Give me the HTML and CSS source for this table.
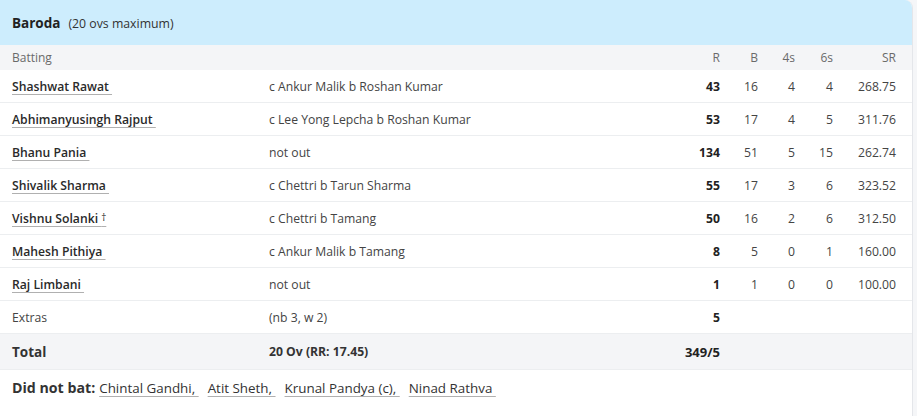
FILE: index.html
```html
<!DOCTYPE html>
<html>
<head>
<meta charset="utf-8">
<link rel="stylesheet" href="styles.css">
</head>
<body>
<div class="page">
  <div class="card">
    <div class="card-head">
      <span class="team">Baroda</span>
      <span class="overs">(20 ovs maximum)</span>
    </div>
    <table class="score">
      <colgroup>
        <col class="c-name"><col class="c-dis"><col class="c-r"><col class="c-b"><col class="c-4"><col class="c-6"><col class="c-sr">
      </colgroup>
      <thead>
        <tr>
          <th class="left">Batting</th>
          <th></th>
          <th>R</th><th>B</th><th>4s</th><th>6s</th><th class="last">SR</th>
        </tr>
      </thead>
      <tbody>
        <tr><td class="name"><a>Shashwat Rawat </a></td><td class="dis">c Ankur Malik b Roshan Kumar</td><td class="runs">43</td><td>16</td><td>4</td><td>4</td><td class="last">268.75</td></tr>
        <tr><td class="name"><a>Abhimanyusingh Rajput </a></td><td class="dis">c Lee Yong Lepcha b Roshan Kumar</td><td class="runs">53</td><td>17</td><td>4</td><td>5</td><td class="last">311.76</td></tr>
        <tr><td class="name"><a>Bhanu Pania </a></td><td class="dis">not out</td><td class="runs">134</td><td>51</td><td>5</td><td>15</td><td class="last">262.74</td></tr>
        <tr><td class="name"><a>Shivalik Sharma </a></td><td class="dis">c Chettri b Tarun Sharma</td><td class="runs">55</td><td>17</td><td>3</td><td>6</td><td class="last">323.52</td></tr>
        <tr><td class="name"><a>Vishnu Solanki <span class="dag">†</span></a></td><td class="dis">c Chettri b Tamang</td><td class="runs">50</td><td>16</td><td>2</td><td>6</td><td class="last">312.50</td></tr>
        <tr><td class="name"><a>Mahesh Pithiya </a></td><td class="dis">c Ankur Malik b Tamang</td><td class="runs">8</td><td>5</td><td>0</td><td>1</td><td class="last">160.00</td></tr>
        <tr><td class="name"><a>Raj Limbani </a></td><td class="dis">not out</td><td class="runs">1</td><td>1</td><td>0</td><td>0</td><td class="last">100.00</td></tr>
        <tr class="extras"><td class="name plain">Extras</td><td class="dis">(nb 3, w 2)</td><td class="runs">5</td><td></td><td></td><td></td><td class="last"></td></tr>
        <tr class="total"><td class="name">Total</td><td class="dis">20 Ov (RR: 17.45)</td><td class="runs">349/5</td><td></td><td></td><td></td><td class="last"></td></tr>
      </tbody>
    </table>
    <div class="dnb">
      <span class="dnb-label">Did not bat:</span><a class="first">Chintal Gandhi,&nbsp;</a><a>Atit Sheth,&nbsp;</a><a>Krunal Pandya (c),&nbsp;</a><a>Ninad Rathva&nbsp;</a>
    </div>
  </div>
</div>
</body>
</html>
```

FILE: styles.css
```css
html, body {
  margin: 0;
  padding: 0;
  background: #f5f6f8;
}
body {
  font-family: "Open Sans", "Noto Sans", sans-serif;
  color: #333;
  width: 917px;
  height: 416px;
  overflow: hidden;
}
.page {
  display: flex;
}
.card {
  width: 912px;
  height: 416px;
  background: #fff;
  border-right: 1px solid #e4e6ea;
  border-top-right-radius: 8px;
  overflow: hidden;
}
.card-head {
  height: 45px;
  background: #cdedfd;
  display: flex;
  align-items: center;
  padding-left: 12px;
  gap: 8px;
  padding-top: 1px;
  box-sizing: border-box;
}
.team {
  font-weight: 700;
  font-size: 13.5px;
  color: #222;
}
.overs {
  font-size: 12.3px;
  color: #333;
}
.score {
  width: 912px;
  border-collapse: collapse;
  table-layout: fixed;
  font-size: 12.2px;
}
.c-name { width: 269px; }
.c-dis { width: 411px; }
.c-r { width: 40px; }
.c-b { width: 38px; }
.c-4 { width: 37px; }
.c-6 { width: 38px; }
.c-sr { width: 79px; }
.score th {
  background: #f4f5f7;
  height: 25px;
  padding: 0;
  font-weight: 400;
  color: #6a6a6a;
  text-align: right;
  font-size: 12px;
}
.score th.left {
  text-align: left;
  padding-left: 12px;
}
.score td {
  height: 32px;
  padding: 0;
  text-align: right;
  color: #444;
  border-bottom: 1px solid #eceef0;
  white-space: nowrap;
}
.score .last {
  padding-right: 16px;
}
.score td.name {
  text-align: left;
  padding-left: 12px;
}
.name a {
  font-weight: 600;
  color: #2a2a2a;
  text-decoration: underline;
  text-decoration-color: #b0b0b0;
  text-underline-offset: 3px;
  white-space: pre;
}
.dag {
  font-size: 10px;
  vertical-align: 2px;
  font-weight: 400;
}
.score td.dis {
  text-align: left;
  color: #444;
}
.score td.runs {
  font-weight: 700;
  color: #222;
}
.score td.plain {
  color: #444;
}
.total td {
  background: #f4f5f7;
  height: 35px;
  font-weight: 700;
  color: #333;
}
.total td.name {
  font-size: 13.5px;
}
.total td.dis {
  font-weight: 700;
  color: #333;
}
.total td.runs {
  font-size: 13px;
}
.dnb {
  padding: 8px 12px;
  font-size: 13.4px;
  color: #333;
  line-height: 20px;
}
.dnb-label {
  font-weight: 700;
  font-size: 14.2px;
}
.dnb a {
  text-decoration: underline;
  text-decoration-color: #b0b0b0;
  text-underline-offset: 3px;
  white-space: pre;
  color: #333;
  margin-left: 9px;
}
.dnb a.first {
  margin-left: 4px;
}
```
